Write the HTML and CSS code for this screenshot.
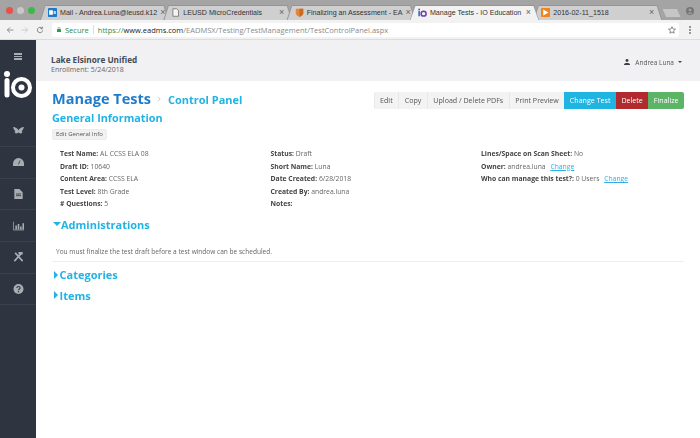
FILE: index.html
```html
<!DOCTYPE html>
<html lang="en">
<head>
<meta charset="utf-8">
<title>Manage Tests - IO Education</title>
<link rel="stylesheet" href="styles.css">
</head>
<body>
<div class="tabstrip">
  <div class="lights"><i class="light red"></i><i class="light grey"></i><i class="light green"></i></div>
  <div class="tabs">
    <div class="tab">
      <svg class="fav" viewBox="0 0 12 12"><rect width="12" height="12" rx="1" fill="#1f78c8"/><rect x="1.500" y="3" width="5" height="6" fill="#fff"/><rect x="7.500" y="4" width="3" height="4" fill="#bcdcf5"/></svg>
      <span class="tab-title">Mail - Andrea.Luna@leusd.k12</span><span class="x">×</span>
    </div>
    <div class="tab">
      <svg class="fav" viewBox="0 0 12 12"><path d="M2.500 1h5l2.500 2.500V11h-7.500z" fill="#f4f4f4" stroke="#666"/></svg>
      <span class="tab-title">LEUSD MicroCredentials</span><span class="x">×</span>
    </div>
    <div class="tab">
      <svg class="fav" viewBox="0 0 12 12"><path d="M1 1h10v6c0 2.500-3 4-5 5-2-1-5-2.500-5-5z" fill="#e4863a"/><path d="M6 1h5v6c0 2.500-3 4-5 5z" fill="#c96a24"/></svg>
      <span class="tab-title">Finalizing an Assessment - EA</span><span class="x">×</span>
    </div>
    <div class="tab active">
      <svg class="fav" viewBox="0 0 12 12"><rect x="0.500" y="4" width="2" height="7" fill="#2f62b5"/><circle cx="1.500" cy="2" r="1.200" fill="#2f62b5"/><circle cx="7.500" cy="7.500" r="3.300" fill="none" stroke="#6a3fb5" stroke-width="2"/></svg>
      <span class="tab-title">Manage Tests - IO Education</span><span class="x">×</span>
    </div>
    <div class="tab">
      <svg class="fav" viewBox="0 0 12 12"><rect width="12" height="12" rx="1" fill="#f0851c"/><path d="M3 2l7 4-7 4z" fill="#fff"/></svg>
      <span class="tab-title">2016-02-11_1518</span><span class="x">×</span>
    </div>
    <div class="newtab"></div>
  </div>
  <svg class="profile" viewBox="0 0 12 12"><circle cx="6" cy="6" r="6" fill="#777"/><circle cx="6" cy="4.500" r="2" fill="#a4a4a4"/><path d="M2.500 10c.5-2.500 6.500-2.500 7 0z" fill="#a4a4a4"/></svg>
</div>
<div class="toolbar">
  <svg class="nav" viewBox="0 0 12 12"><path d="M11 6H2M6 2L2 6l4 4" fill="none" stroke="#777" stroke-width="1.200"/></svg>
  <svg class="nav" viewBox="0 0 12 12"><path d="M1 6h9M6 2l4 4-4 4" fill="none" stroke="#c6c6c6" stroke-width="1.200"/></svg>
  <svg class="nav" viewBox="0 0 12 12"><path d="M10 6.500A4 4 0 1 1 8.700 3M9.500 1v3h-3" fill="none" stroke="#666" stroke-width="1.200"/></svg>
  <div class="omnibox">
    <svg class="lock" viewBox="0 0 8 10"><rect y="4" width="8" height="6" rx="1" fill="#2e9a4e"/><path d="M2 4V2.500a2 2 0 0 1 4 0V4" fill="none" stroke="#2e9a4e"/></svg>
    <span class="secure">Secure</span><span class="sep"></span>
    <span class="url"><span class="https">https://</span><span class="host">www.eadms.com</span>/EADMSX/Testing/TestManagement/TestControlPanel.aspx</span>
    <svg class="star" viewBox="0 0 12 12"><path d="M6 1l1.500 3.400 3.700.4-2.800 2.400.8 3.600L6 9l-3.200 1.800.8-3.600L.8 4.800l3.700-.4z" fill="none" stroke="#555"/></svg>
  </div>
  <div class="dots"><i></i><i></i><i></i></div>
</div>
<div class="app">
  <nav class="sidebar">
    <div class="burger"><i></i><i></i><i></i></div>
    <div class="logo">
      <svg viewBox="0 0 30 30" width="30" height="30"><circle cx="3" cy="3" r="3" fill="#fff"/><rect x="0.500" y="7" width="5" height="19.500" rx="2.500" fill="#fff"/><circle cx="17.500" cy="16.500" r="8.500" fill="none" stroke="#fff" stroke-width="4"/><circle cx="17.500" cy="16.500" r="3" fill="#fff"/></svg>
    </div>
    <div class="nav-item first"><svg viewBox="0 0 14 10"><path d="M0 0c3 0 6 2 7 4 1-2 4-4 7-4-1 2-1 4-3 5l1 2c-2 2-4 1-5 0-1 1-3 2-5 0l1-2C1 4 1 2 0 0z" fill="#a9adb3"/></svg></div>
    <div class="nav-item"><svg viewBox="0 0 14 10"><path d="M0 10V7a7 7 0 0 1 14 0v3z" fill="#a9adb3"/><path d="M7 8L9 3" stroke="#2e3440"/></svg></div>
    <div class="nav-item"><svg viewBox="0 0 10 12"><path d="M0 0h6l4 4v8H0z" fill="#a9adb3"/><path d="M2 6h6M2 8h6" stroke="#2e3440"/></svg></div>
    <div class="nav-item"><svg viewBox="0 0 14 11"><path d="M.5 0v10.500H14" fill="none" stroke="#a9adb3"/><path d="M3 5h2v5H3zM6 3h2v7H6zM9 6h2v4H9zM12 2h2v8h-2z" fill="#a9adb3"/></svg></div>
    <div class="nav-item"><svg viewBox="0 0 12 12"><path d="M2 1l9 10M10 1L1 11" stroke="#a9adb3" stroke-width="2"/><path d="M6 0h5v3H6z" fill="#a9adb3"/></svg></div>
    <div class="nav-item"><svg viewBox="0 0 12 12"><circle cx="6" cy="6" r="6" fill="#a9adb3"/><path d="M4 4.800C4 2.500 8 2.500 8 4.800 8 6 6 6 6 7.500" fill="none" stroke="#2e3440" stroke-width="1.300"/><rect x="5.300" y="8.500" width="1.400" height="1.400" fill="#2e3440"/></svg></div>
  </nav>
  <main class="main">
    <header class="org">
      <div>
        <div class="org-name">Lake Elsinore Unified</div>
        <div class="org-sub">Enrollment: 5/24/2018</div>
      </div>
      <div class="user">
        <svg viewBox="0 0 10 10"><circle cx="5" cy="2.600" r="2.400" fill="#3a3f47"/><path d="M0 10c0-3 2-3.500 5-3.500s5 .5 5 3.500z" fill="#3a3f47"/></svg>
        <span>Andrea Luna</span><i class="caret"></i>
      </div>
    </header>
    <div class="content">
      <div class="titlebar">
        <div class="crumbs">
          <h1>Manage Tests</h1>
          <svg class="chev" viewBox="0 0 6 8"><path d="M1 1l3 3-3 3" fill="none" stroke="#b5b8bd"/></svg>
          <h2>Control Panel</h2>
        </div>
        <div class="btns">
          <span class="btn">Edit</span><span class="btn">Copy</span><span class="btn">Upload / Delete PDFs</span><span class="btn">Print Preview</span><span class="btn blue">Change Test</span><span class="btn red">Delete</span><span class="btn green">Finalize</span>
        </div>
      </div>
      <h3 class="gen">General Information</h3>
      <span class="edit">Edit General Info</span>
      <div class="info">
        <div class="col">
          <p><b>Test Name:</b> AL CCSS ELA 08</p>
          <p><b>Draft ID:</b> 10640</p>
          <p><b>Content Area:</b> CCSS ELA</p>
          <p><b>Test Level:</b> 8th Grade</p>
          <p><b># Questions:</b> 5</p>
        </div>
        <div class="col">
          <p><b>Status:</b> Draft</p>
          <p><b>Short Name:</b> Luna</p>
          <p><b>Date Created:</b> 6/28/2018</p>
          <p><b>Created By:</b> andrea.luna</p>
          <p><b>Notes:</b></p>
        </div>
        <div class="col">
          <p><b>Lines/Space on Scan Sheet:</b> No</p>
          <p><b>Owner:</b> andrea.luna <a>Change</a></p>
          <p><b>Who can manage this test?:</b> 0 Users <a>Change</a></p>
        </div>
      </div>
      <div class="sec open"><i class="tri down"></i><span>Administrations</span></div>
      <p class="note">You must finalize the test draft before a test window can be scheduled.</p>
      <div class="sec cat"><i class="tri"></i><span>Categories</span></div>
      <div class="sec items"><i class="tri"></i><span>Items</span></div>
    </div>
  </main>
</div>
</body>
</html>
```
FILE: styles.css
```css
* { box-sizing: border-box; }
html, body { margin: 0; height: 100%; overflow: hidden; }
body { width: 700px; height: 438px; font-family: "Open Sans", sans-serif; color: #555; background: #fff; display: flex; flex-direction: column; filter: blur(0.35px); }
p, h1, h2, h3 { margin: 0; }

.tabstrip { height: 20px; flex: none; background: #a4a4a4; display: flex; align-items: flex-end; }
.lights { display: flex; gap: 4px; width: 40px; padding: 0 0 6.500px 6px; flex: none; }
.light { width: 7px; height: 7px; border-radius: 50%; }
.red { background: #e9504a; } .grey { background: #c8c8c8; } .green { background: #3fb84a; }
.tabs { display: flex; align-items: flex-end; height: 15px; flex: 1; }
.tab { position: relative; isolation: isolate; width: 129px; height: 15px; margin-right: -5.700px; background: #959595; clip-path: polygon(0 100%, 5px 0, calc(100% - 5px) 0, 100% 100%); display: flex; align-items: center; padding: 0 8px 0 8px; font-family: "Liberation Sans", sans-serif; font-size: 7.100px; color: #333; gap: 3px; flex: none; }
.tab::before { content: ""; position: absolute; inset: 0; z-index: -1; background: #cfcfcf; clip-path: polygon(1px 100%, 5.500px 1px, calc(100% - 5.500px) 1px, calc(100% - 1px) 100%); }
.tab.active { z-index: 1; }
.tab.active::before { background: #f2f2f2; clip-path: polygon(0.500px 100%, 5.500px 1px, calc(100% - 5.500px) 1px, calc(100% - 0.500px) 100%); }
.fav { width: 9px; height: 9px; flex: none; }
.tab-title { flex: 1; white-space: nowrap; }
.x { font-size: 9px; color: #666; line-height: 1; }
.newtab { width: 18px; height: 8px; margin-left: 6px; margin-bottom: 3px; background: #c6c6c6; clip-path: polygon(0 0, 80% 0, 100% 100%, 20% 100%); }
.profile { width: 8px; height: 8px; margin: 0 6px 5.500px auto; flex: none; }

.toolbar { height: 20px; flex: none; background: #f2f2f2; border-bottom: 1px solid #dcdcdc; display: flex; align-items: center; padding: 0 9px 0 6px; gap: 7px; }
.nav { width: 8px; height: 8px; flex: none; }
.omnibox { flex: 1; height: 14px; background: #fff; margin-left: 1px; border-radius: 2px; display: flex; align-items: center; padding: 0 3px 0 5px; font-size: 7.500px; white-space: nowrap; }
.lock { width: 4px; height: 5px; margin-right: 4px; flex: none; }
.secure { color: #2e8b4a; }
.sep { width: 1px; height: 9px; background: #ddd; margin: 0 4px; }
.url { flex: 1; color: #8a8a8a; }
.https { color: #2e8b4a; }
.host { color: #222; }
.star { width: 8px; height: 8px; flex: none; }
.dots { display: flex; flex-direction: column; gap: 1px; width: 2px; margin-left: 3px; }
.dots i { width: 2px; height: 2px; background: #777; border-radius: 50%; }

.app { flex: 1; display: flex; min-height: 0; }
.sidebar { width: 36px; flex: none; background: #2e3440; display: flex; flex-direction: column; align-items: center; padding-top: 13px; }
.burger { display: flex; flex-direction: column; gap: 1px; width: 8px; }
.burger i { height: 1.500px; background: #a9adb3; }
.logo { align-self: flex-start; margin: 11.500px 0 0 4px; height: 30px; }
.nav-item { width: 100%; height: 31.700px; flex: none; display: flex; align-items: center; justify-content: center; border-bottom: 1px solid #3a414d; }
.nav-item.first { margin-top: 14.300px; }
.nav-item svg { width: 11px; height: 10px; }

.main { flex: 1; min-width: 0; display: flex; flex-direction: column; }
.org { height: 41px; flex: none; background: #f1f1f3; display: flex; justify-content: space-between; align-items: center; padding: 6px 18px 0 15px; }
.org-name { font-size: 8.200px; font-weight: 700; color: #444a52; line-height: 11px; }
.org-sub { font-size: 7px; color: #666; line-height: 9px; }
.user { display: flex; align-items: center; font-size: 6.500px; color: #555; margin-bottom: 3px; }
.user svg { width: 6px; height: 6px; margin-right: 5px; }
.caret { width: 0; height: 0; border: 2px solid transparent; border-top-color: #444; border-bottom: 0; margin-left: 4px; }

.content { flex: 1; padding: 8px 16px 0 16px; }
.titlebar { display: flex; justify-content: space-between; align-items: flex-start; height: 19px; }
.crumbs { display: flex; align-items: center; height: 19px; }
h1 { font-size: 14.500px; font-weight: 700; color: #1e7ccb; line-height: 19px; }
.chev { width: 5px; height: 6px; margin: 0 6px 0 6px; }
h2 { font-size: 11px; font-weight: 700; color: #22b3e4; line-height: 19px; margin-top: 1px; }
.btns { display: flex; height: 17px; margin-top: 3px; }
.btn { background: #f3f3f3; border-left: 1px solid #e8e8e8; padding: 0 5.500px; font-size: 7.100px; color: #555; line-height: 17px; white-space: nowrap; }
.btn:first-child { border-radius: 2px 0 0 2px; }
.btn.blue { background: #1fb5e3; color: #fff; border: 0; }
.btn.red { background: #b02a2e; color: #fff; border: 0; }
.btn.green { background: #5cb567; color: #fff; border: 0; border-radius: 0 2px 2px 0; }
.gen { font-size: 10.800px; font-weight: 700; color: #22b3e4; line-height: 14px; margin-top: 3px; }
.edit { display: block; width: fit-content; background: #f1f1f1; border: 1px solid #ececec; border-radius: 2px; font-size: 6px; color: #555; line-height: 9px; padding: 0 3px; margin-top: 4px; }
.info { display: flex; margin: 8px 0 0 8px; font-size: 6.800px; line-height: 12.600px; color: #666; }
.col { width: 210.500px; flex: none; }
.col b { color: #444; font-weight: 700; }
.col a { color: #2bb0e8; text-decoration: underline; margin-left: 3px; }
.sec { display: flex; align-items: center; font-size: 11px; font-weight: 700; color: #22b3e4; line-height: 15px; margin-left: 2px; }
.sec.open { margin-top: 6px; margin-left: 1px; }
.tri { width: 0; height: 0; border-style: solid; border-width: 4px 0 4px 4.500px; border-color: transparent transparent transparent #22b3e4; margin-right: 1.500px; }
.tri.down { border-width: 4.500px 4px 0; border-color: #22b3e4 transparent transparent; margin-right: 0; }
.note { font-size: 6.550px; color: #666; line-height: 10px; margin-top: 15.500px; padding: 0 0 3.500px 4px; border-bottom: 1px solid #eee; }
.sec.cat { margin-top: 5.500px; }
.sec.items { margin-top: 5.500px; }
```
